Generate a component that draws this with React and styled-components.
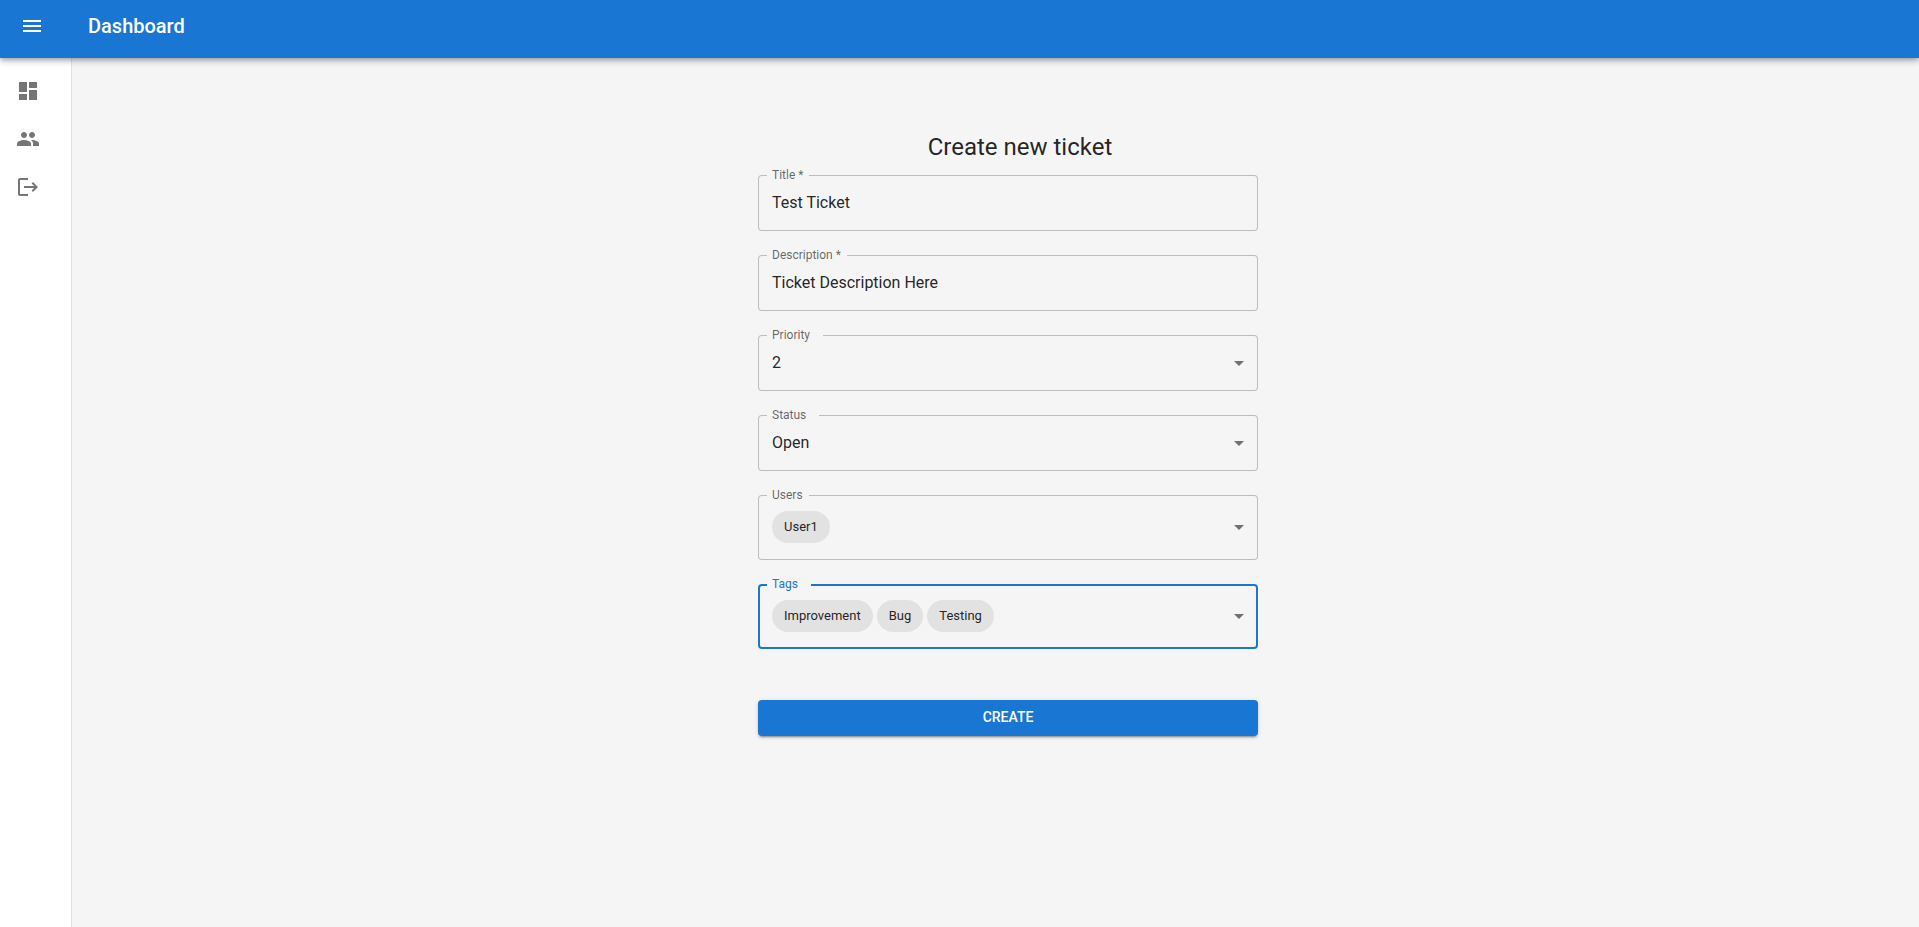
import { useState } from "react";
import styled, { createGlobalStyle, ThemeProvider } from "styled-components";

const theme = {
  primary: "#1976d2",
  page: "#f5f5f5",
  text: "rgba(0, 0, 0, 0.87)",
  muted: "rgba(0, 0, 0, 0.6)",
  icon: "rgba(0, 0, 0, 0.54)",
  outline: "#bcbcbc",
  chip: "#e2e2e2",
};

const GlobalStyle = createGlobalStyle`
  *, *::before, *::after { box-sizing: border-box; }
  body {
    margin: 0;
    background: ${theme.page};
    color: ${theme.text};
    font-family: Roboto, "Liberation Sans", sans-serif;
    font-size: 16px;
  }
  button, input, select { font: inherit; color: inherit; }
`;

const Page = styled.div`
  display: flex;
  flex-direction: column;
  min-height: 100vh;
`;

const AppBar = styled.header`
  position: relative;
  z-index: 1;
  display: flex;
  align-items: center;
  gap: 32px;
  height: 58px;
  padding: 0 24px 6px 8px;
  background: ${(p) => p.theme.primary};
  color: #fff;
  box-shadow: 0 2px 4px -1px rgba(0, 0, 0, 0.2), 0 4px 5px 0 rgba(0, 0, 0, 0.14),
    0 1px 10px 0 rgba(0, 0, 0, 0.12);
`;

const MenuButton = styled.button`
  display: flex;
  padding: 12px;
  border: 0;
  background: none;
  cursor: pointer;
`;

const BarTitle = styled.h1`
  margin: 0;
  font-size: 20px;
  font-weight: 500;
  line-height: 32px;
`;

const Body = styled.div`
  flex: 1;
  display: flex;
`;

const Sidebar = styled.nav`
  display: flex;
  flex-direction: column;
  flex: 0 0 72px;
  padding-top: 9px;
  background: #fff;
  border-right: 1px solid rgba(0, 0, 0, 0.12);
`;

const NavLink = styled.a`
  display: flex;
  padding: 12px 16px;
  color: ${(p) => p.theme.icon};
`;

const Icon = styled.svg`
  width: 24px;
  height: 24px;
  fill: currentColor;
`;

const Main = styled.main`
  flex: 1;
  padding: 73px 0 24px 25px;
`;

const Heading = styled.h2`
  margin: 0 0 12px;
  padding-left: 24px;
  font-size: 24px;
  font-weight: 400;
  line-height: 32px;
  text-align: center;
`;

const Form = styled.form`
  display: flex;
  flex-direction: column;
  gap: 24px;
  width: 100%;
  max-width: 500px;
  margin: 0 auto;
`;

const Field = styled.div`
  position: relative;
  display: flex;
  align-items: center;
  min-height: ${(p) => (p.$chips ? 65 : 56)}px;
  border-radius: 4px;
  box-shadow: inset 0 0 0
    ${(p) => (p.$active ? `2px ${p.theme.primary}` : `1px ${p.theme.outline}`)};
`;

const Label = styled.label`
  position: absolute;
  top: -8px;
  left: 9px;
  padding: 0 ${(p) => (p.$wide ? 13 : 6)}px 0 5px;
  background: ${(p) => p.theme.page};
  color: ${(p) => (p.$active ? p.theme.primary : p.theme.muted)};
  font-size: 12px;
  line-height: 16px;
`;

const TextInput = styled.input`
  flex: 1;
  min-width: 0;
  padding: 16px 14px;
  border: 0;
  outline: 0;
  background: none;
  line-height: 24px;
`;

const Select = styled.select`
  flex: 1;
  min-width: 0;
  padding: 16px 32px 16px 14px;
  border: 0;
  outline: 0;
  appearance: none;
  background: none;
  line-height: 24px;
  cursor: pointer;
`;

const ChipPicker = styled.select`
  position: absolute;
  inset: 0;
  width: 100%;
  opacity: 0;
  cursor: pointer;
`;

const Arrow = styled(Icon)`
  position: absolute;
  top: round(down, 50% - 12px, 1px);
  right: 7px;
  color: ${(p) => p.theme.icon};
  pointer-events: none;
`;

const ChipList = styled.div`
  display: flex;
  flex-wrap: wrap;
  gap: 4px;
  padding: 16px 32px 17px 14px;
`;

const Chip = styled.span`
  padding: 0 12px;
  border-radius: 16px;
  background: ${(p) => p.theme.chip};
  font-size: 13px;
  line-height: 32px;
`;

const SubmitButton = styled.button`
  height: 36px;
  margin-top: 27px;
  padding: 0 16px 2px;
  border: 0;
  border-radius: 4px;
  background: ${(p) => p.theme.primary};
  color: #fff;
  font-size: 14px;
  font-weight: 500;
  text-transform: uppercase;
  cursor: pointer;
  box-shadow: 0 3px 1px -2px rgba(0, 0, 0, 0.2), 0 2px 2px 0 rgba(0, 0, 0, 0.14),
    0 1px 5px 0 rgba(0, 0, 0, 0.12);
`;

const paths = {
  menu: "M3 18h18v-2H3v2zm0-5h18v-2H3v2zm0-7v2h18V6H3z",
  dashboard: "M3 13h8V3H3v10zm0 8h8v-6H3v6zm10 0h8V11h-8v10zm0-18v6h8V3h-8z",
  people:
    "M16 11c1.66 0 2.99-1.34 2.99-3S17.66 5 16 5c-1.66 0-3 1.34-3 3s1.34 3 3 3zm-8 0c1.66 0 2.99-1.34 2.99-3S9.66 5 8 5C6.34 5 5 6.34 5 8s1.34 3 3 3zm0 2c-2.33 0-7 1.17-7 3.5V19h14v-2.5c0-2.33-4.67-3.5-7-3.5zm8 0c-.29 0-.62.02-.97.05 1.16.84 1.97 1.97 1.97 3.45V19h6v-2.5c0-2.33-4.67-3.5-7-3.5z",
  logout:
    "m17 7-1.41 1.41L18.17 11H8v2h10.17l-2.58 2.58L17 17l5-5zM4 5h8V3H4c-1.1 0-2 .9-2 2v14c0 1.1.9 2 2 2h8v-2H4V5z",
  arrow: "M7 10l5 5 5-5z",
};

const Glyph = ({ name, as: Component = Icon }) => (
  <Component viewBox="0 0 24 24" aria-hidden="true">
    <path d={paths[name]} />
  </Component>
);

const navItems = [
  { name: "dashboard", label: "Dashboard" },
  { name: "people", label: "Users" },
  { name: "logout", label: "Log out" },
];

export default function App() {
  const [active, setActive] = useState("tags");
  const [values, setValues] = useState({
    title: "Test Ticket",
    description: "Ticket Description Here",
    priority: "2",
    status: "Open",
    users: ["User1"],
    tags: ["Improvement", "Bug", "Testing"],
  });

  const set = (id, value) => setValues((v) => ({ ...v, [id]: value }));
  const toggle = (id, item) =>
    set(
      id,
      values[id].includes(item)
        ? values[id].filter((x) => x !== item)
        : [...values[id], item]
    );

  const controlProps = (id) => ({
    id,
    name: id,
    onFocus: () => setActive(id),
    onBlur: () => setActive(null),
  });

  const renderText = (id, label) => (
    <Field $active={active === id}>
      <TextInput
        {...controlProps(id)}
        type="text"
        required
        value={values[id]}
        onChange={(e) => set(id, e.target.value)}
      />
      <Label htmlFor={id} $active={active === id}>
        {label} *
      </Label>
    </Field>
  );

  const renderSelect = (id, label, options) => (
    <Field $active={active === id}>
      <Select
        {...controlProps(id)}
        value={values[id]}
        onChange={(e) => set(id, e.target.value)}
      >
        {options.map((o) => (
          <option key={o}>{o}</option>
        ))}
      </Select>
      <Glyph name="arrow" as={Arrow} />
      <Label htmlFor={id} $active={active === id} $wide>
        {label}
      </Label>
    </Field>
  );

  const renderChips = (id, label, options, wide) => (
    <Field $chips $active={active === id}>
      <ChipList>
        {values[id].map((item) => (
          <Chip key={item}>{item}</Chip>
        ))}
      </ChipList>
      <Glyph name="arrow" as={Arrow} />
      <ChipPicker
        {...controlProps(id)}
        value=""
        onChange={(e) => toggle(id, e.target.value)}
      >
        <option value="" disabled />
        {options.map((o) => (
          <option key={o}>{o}</option>
        ))}
      </ChipPicker>
      <Label htmlFor={id} $active={active === id} $wide={wide}>
        {label}
      </Label>
    </Field>
  );

  return (
    <ThemeProvider theme={theme}>
      <GlobalStyle />
      <Page>
        <AppBar>
          <MenuButton type="button" aria-label="Open menu">
            <Glyph name="menu" />
          </MenuButton>
          <BarTitle>Dashboard</BarTitle>
        </AppBar>
        <Body>
          <Sidebar>
            {navItems.map((item) => (
              <NavLink key={item.name} href="#" aria-label={item.label}>
                <Glyph name={item.name} />
              </NavLink>
            ))}
          </Sidebar>
          <Main>
            <Heading>Create new ticket</Heading>
            <Form onSubmit={(e) => e.preventDefault()}>
              {renderText("title", "Title")}
              {renderText("description", "Description")}
              {renderSelect("priority", "Priority", ["1", "2", "3"])}
              {renderSelect("status", "Status", ["Open", "Closed"])}
              {renderChips("users", "Users", ["User1", "User2"], false)}
              {renderChips("tags", "Tags", ["Improvement", "Bug", "Testing"], true)}
              <SubmitButton type="submit">Create</SubmitButton>
            </Form>
          </Main>
        </Body>
      </Page>
    </ThemeProvider>
  );
}
